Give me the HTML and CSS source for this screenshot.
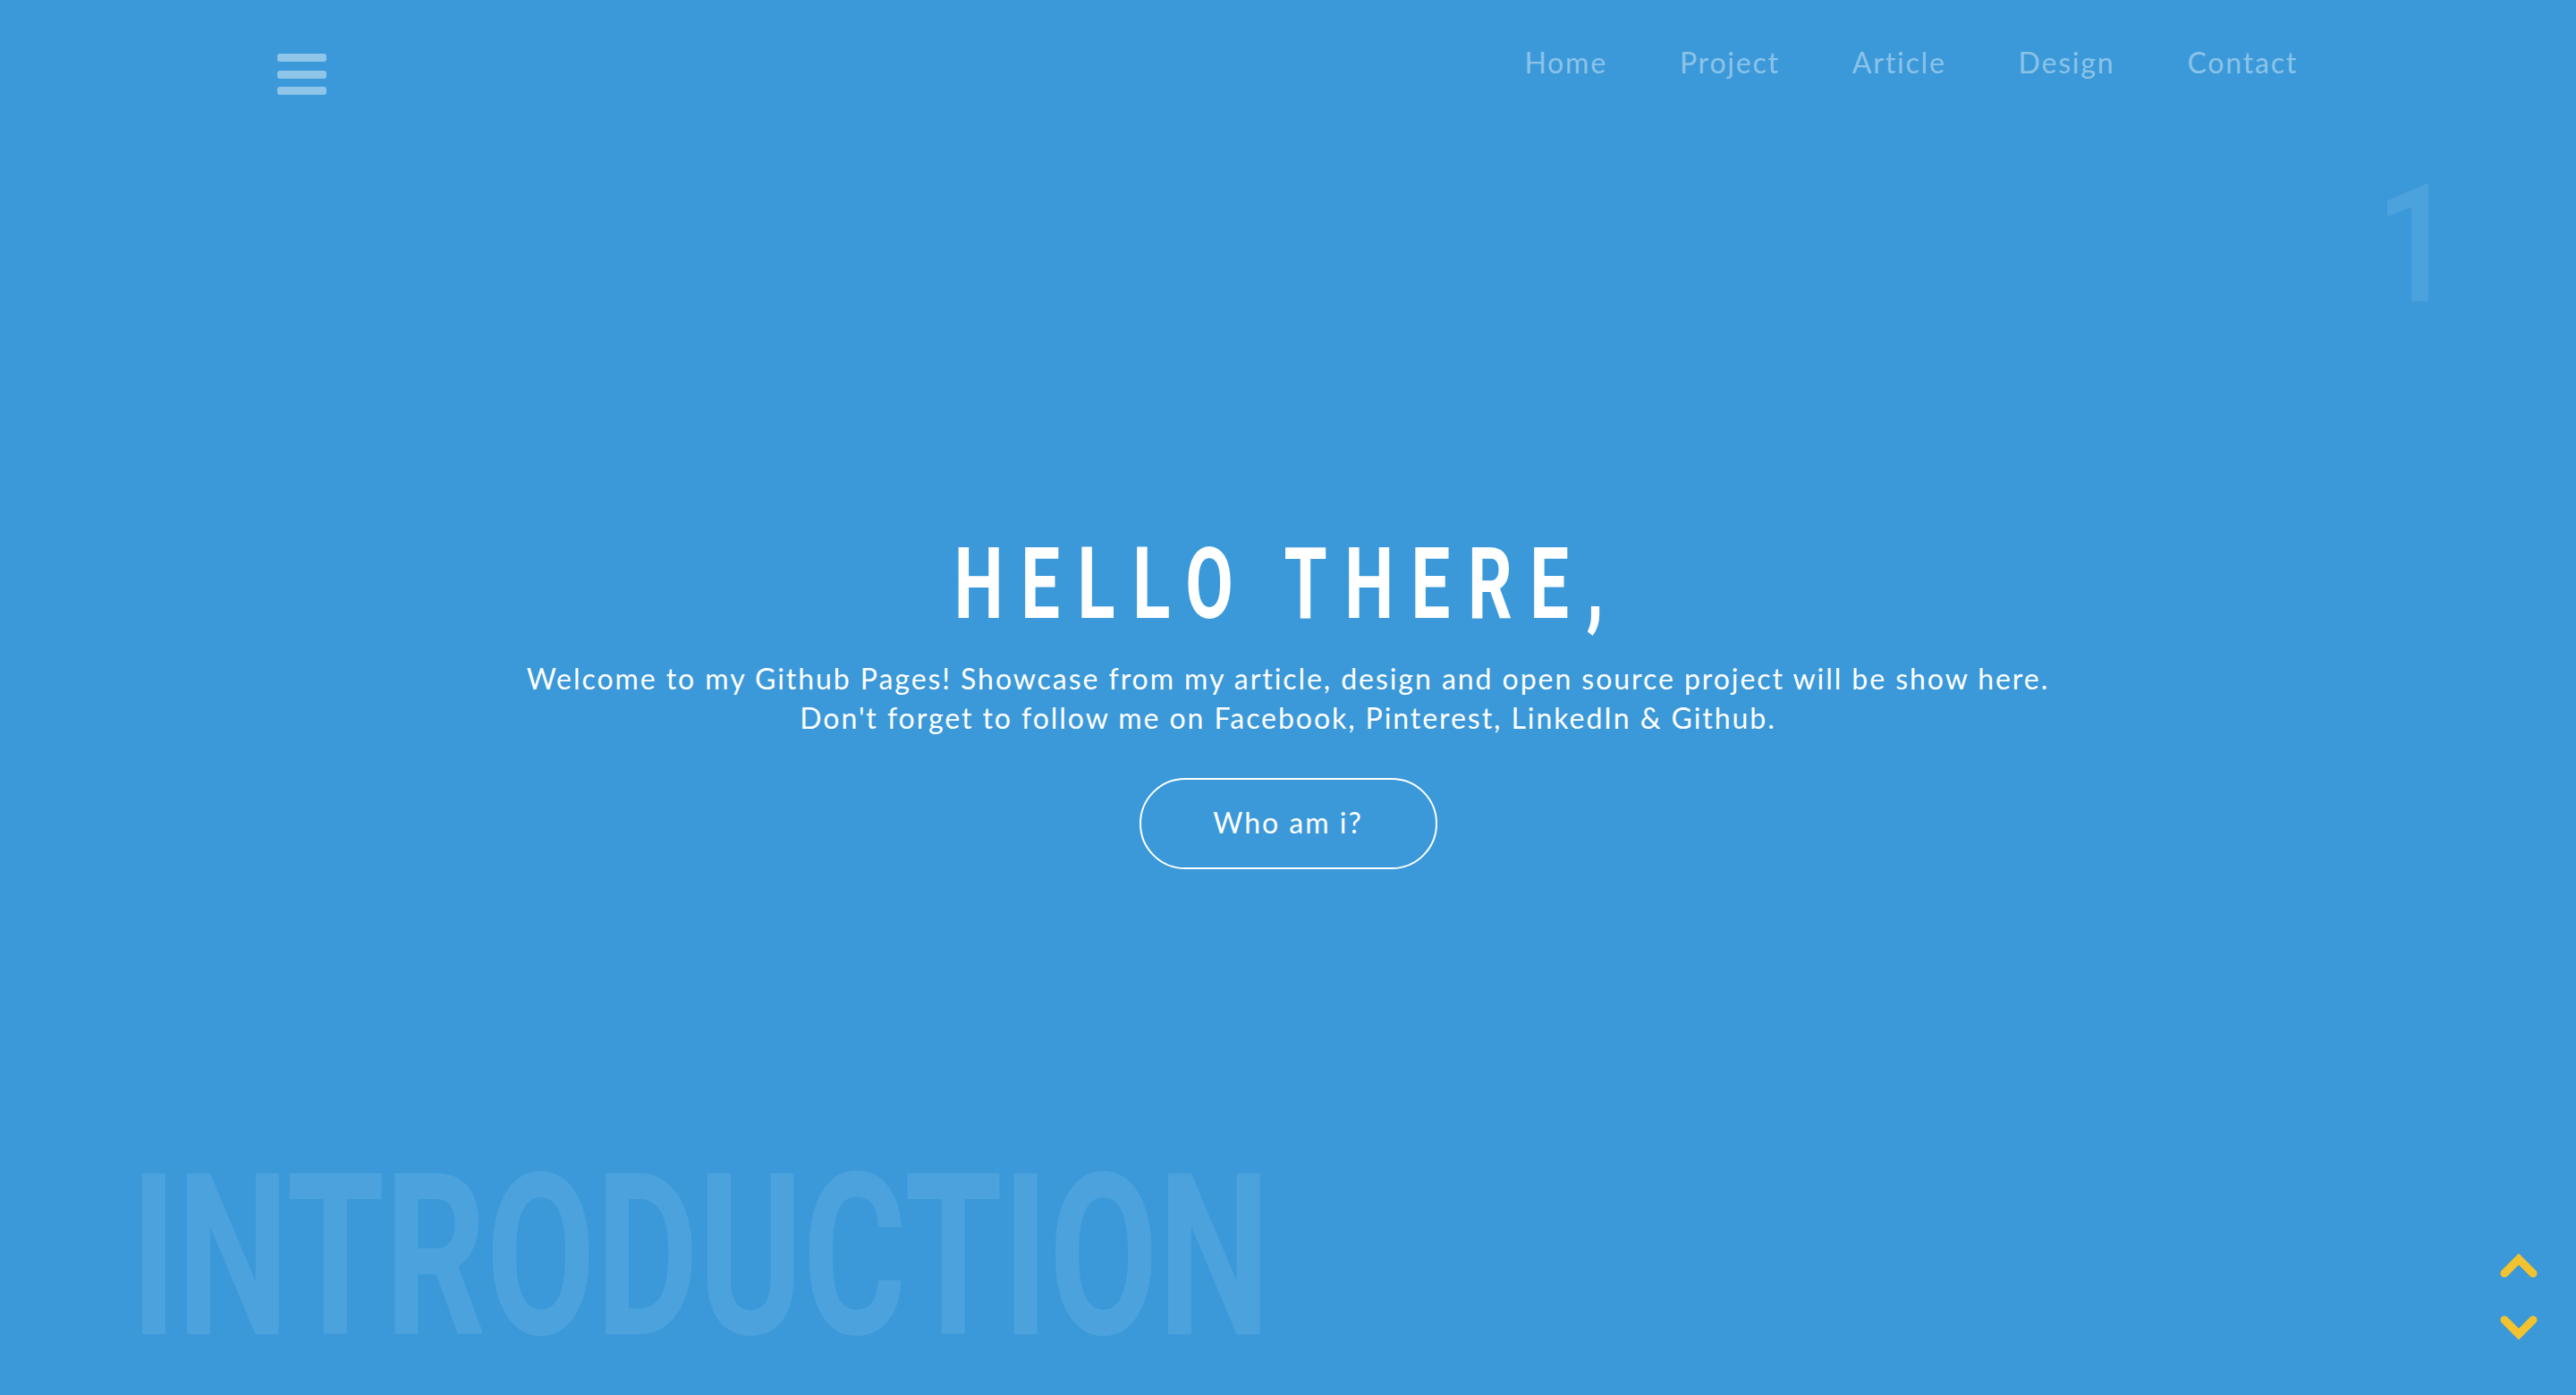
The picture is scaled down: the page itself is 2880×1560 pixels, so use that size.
FILE: index.html
```html
<!DOCTYPE html>
<html lang="en">
<head>
<meta charset="utf-8">
<title>Hello there</title>
<link rel="stylesheet" href="styles.css">
</head>
<body>
<div class="page">
  <header class="topbar">
    <div class="menu-toggle" aria-label="Menu"><span></span><span></span><span></span></div>
    <nav class="main-nav">
      <ul>
        <li><a href="#">Home</a></li>
        <li><a href="#">Project</a></li>
        <li><a href="#">Article</a></li>
        <li><a href="#">Design</a></li>
        <li><a href="#">Contact</a></li>
      </ul>
    </nav>
  </header>

  <section class="hero">
    <h1 class="hero-title"><span>HELLO THERE,</span></h1>
    <p class="hero-text">Welcome to my Github Pages! Showcase from my article, design and open source project will be show here.<br>Don't forget to follow me on Facebook, Pinterest, LinkedIn &amp; Github.</p>
    <a class="hero-btn" href="#">Who am i?</a>
  </section>

  <div class="slide-num">1</div>
  <div class="bg-word">INTRODUCTION</div>

  <div class="pager">
    <svg class="chev" width="42" height="27" viewBox="0 0 42 27"><polyline points="5,22 21,6 37,22"/></svg>
    <svg class="chev" width="42" height="27" viewBox="0 0 42 27"><polyline points="5,5 21,21 37,5"/></svg>
  </div>
</div>
</body>
</html>
```

FILE: styles.css
```css
html, body {
  margin: 0;
  padding: 0;
}

body {
  background: #3b99d9;
  font-family: "Lato", "Open Sans", sans-serif;
  color: #ffffff;
  overflow: hidden;
}

.page {
  position: relative;
  height: 1560px;
  overflow: hidden;
}

.topbar {
  display: flex;
  justify-content: space-between;
  align-items: flex-start;
  height: 140px;
  padding: 0 311px 0 310px;
}

.menu-toggle {
  margin-top: 60px;
  display: flex;
  flex-direction: column;
  gap: 9.5px;
}

.menu-toggle span {
  display: block;
  width: 55px;
  height: 9px;
  border-radius: 3px;
  background: rgba(255, 255, 255, 0.43);
}

.main-nav ul {
  list-style: none;
  margin: 0;
  padding: 54px 0 0 0;
  display: flex;
  gap: 81px;
}

.main-nav a {
  color: rgba(255, 255, 255, 0.43);
  text-decoration: none;
  font-size: 32px;
  line-height: 32px;
  letter-spacing: 1.8px;
}

.hero {
  padding-top: 458px;
  display: flex;
  flex-direction: column;
  align-items: center;
  text-align: center;
}

.hero-title {
  margin: 0;
  font-family: "Roboto", "Liberation Sans", sans-serif;
  font-weight: 700;
  font-size: 111px;
  line-height: 111px;
  letter-spacing: 28px;
}

.hero-title span {
  display: inline-block;
  transform: scaleX(0.7);
}

.hero-text {
  margin: 28px 0 0 0;
  font-size: 32px;
  line-height: 44px;
  letter-spacing: 1.95px;
}

.hero-btn {
  margin-top: 45px;
  box-sizing: border-box;
  width: 333px;
  height: 102px;
  padding-bottom: 4px;
  border: 2px solid #ffffff;
  border-radius: 51px;
  display: flex;
  align-items: center;
  justify-content: center;
  color: #ffffff;
  text-decoration: none;
  font-size: 32px;
  letter-spacing: 2px;
}

.slide-num {
  position: absolute;
  top: 182px;
  left: 2656px;
  font-family: "Roboto", "Liberation Sans", sans-serif;
  font-weight: 500;
  font-size: 184px;
  line-height: 184px;
  color: rgba(255, 255, 255, 0.09);
  transform: scaleX(0.85);
  transform-origin: left center;
}

.bg-word {
  position: absolute;
  top: 1280px;
  left: 146px;
  font-family: "Roboto", "Liberation Sans", sans-serif;
  font-weight: 700;
  font-size: 252px;
  line-height: 252px;
  color: rgba(255, 255, 255, 0.09);
  transform: scaleX(0.703);
  transform-origin: left center;
  white-space: nowrap;
}

.pager {
  position: absolute;
  right: 43px;
  top: 1402px;
  display: flex;
  flex-direction: column;
  gap: 42px;
}

.chev {
  display: block;
}

.chev polyline {
  fill: none;
  stroke: #f3c22f;
  stroke-width: 9;
  stroke-linecap: round;
  stroke-linejoin: miter;
}
```
